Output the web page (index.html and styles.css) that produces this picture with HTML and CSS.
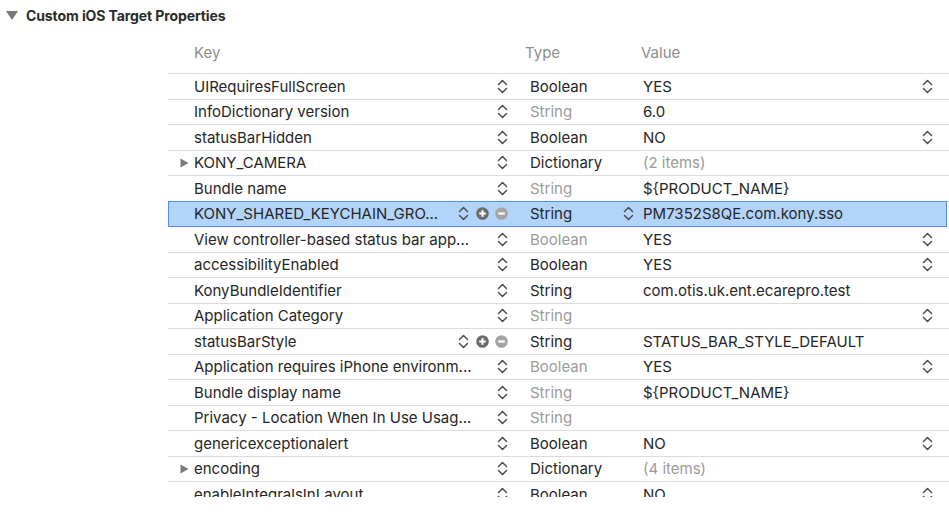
FILE: index.html
```html
<!DOCTYPE html>
<html>
<head>
<meta charset="utf-8">
<link rel="stylesheet" href="styles.css">
</head>
<body>
<svg width="0" height="0" class="defs">
  <defs>
    <symbol id="updown" viewBox="0 0 11 17">
      <path d="M1.5 6.5 L5.5 2.5 L9.5 6.5" fill="none" stroke="#4d4d4d" stroke-width="1.5" stroke-linecap="round" stroke-linejoin="round"/>
      <path d="M1.5 10.5 L5.5 14.5 L9.5 10.5" fill="none" stroke="#4d4d4d" stroke-width="1.5" stroke-linecap="round" stroke-linejoin="round"/>
    </symbol>
    <symbol id="plus" viewBox="0 0 13 13">
      <circle cx="6.5" cy="6.5" r="6.3" fill="#6b6b6b"/>
      <path d="M6.5 3.2 V9.8 M3.2 6.5 H9.8" stroke="#fff" stroke-width="2.2"/>
    </symbol>
    <symbol id="minus" viewBox="0 0 13 13">
      <circle cx="6.5" cy="6.5" r="6.3" fill="#a3a3a3"/>
      <path d="M3.2 6.5 H9.8" stroke="#fff" stroke-width="2.2"/>
    </symbol>
    <symbol id="tri-right" viewBox="0 0 9 10">
      <path d="M0.5 0.5 L8.5 5 L0.5 9.5 Z" fill="#7a7a7a"/>
    </symbol>
  </defs>
</svg>

<div class="section-header">
  <svg class="disclosure" width="12" height="9" viewBox="0 0 12 9"><path d="M0 0 H12 L6 9 Z" fill="#7a7a7a"/></svg>
  <span class="section-title">Custom iOS Target Properties</span>
</div>

<div class="plist">
  <div class="col-head">
    <span></span>
    <span class="h-key">Key</span>
    <span class="h-type">Type</span>
    <span class="h-value">Value</span>
  </div>
  <div class="rows">
    <div class="row">
      <span class="arrow"></span>
      <span class="key"><span class="key-text">UIRequiresFullScreen</span><svg class="ud"><use href="#updown"/></svg></span>
      <span class="type">Boolean</span>
      <span class="value"><span>YES</span><svg class="ud"><use href="#updown"/></svg></span>
    </div>
    <div class="row">
      <span class="arrow"></span>
      <span class="key"><span class="key-text">InfoDictionary version</span><svg class="ud"><use href="#updown"/></svg></span>
      <span class="type dim">String</span>
      <span class="value"><span>6.0</span></span>
    </div>
    <div class="row">
      <span class="arrow"></span>
      <span class="key"><span class="key-text">statusBarHidden</span><svg class="ud"><use href="#updown"/></svg></span>
      <span class="type">Boolean</span>
      <span class="value"><span>NO</span><svg class="ud"><use href="#updown"/></svg></span>
    </div>
    <div class="row">
      <span class="arrow"><svg class="tri"><use href="#tri-right"/></svg></span>
      <span class="key"><span class="key-text">KONY_CAMERA</span><svg class="ud"><use href="#updown"/></svg></span>
      <span class="type">Dictionary</span>
      <span class="value"><span class="dim">(2 items)</span></span>
    </div>
    <div class="row">
      <span class="arrow"></span>
      <span class="key"><span class="key-text">Bundle name</span><svg class="ud"><use href="#updown"/></svg></span>
      <span class="type dim">String</span>
      <span class="value"><span>${PRODUCT_NAME}</span></span>
    </div>
    <div class="row selected">
      <span class="arrow"></span>
      <span class="key"><span class="key-text">KONY_SHARED_KEYCHAIN_GRO...</span><svg class="ud"><use href="#updown"/></svg><svg class="pm"><use href="#plus"/></svg><svg class="pm"><use href="#minus"/></svg></span>
      <span class="type type-sel"><span>String</span><svg class="ud"><use href="#updown"/></svg></span>
      <span class="value"><span>PM7352S8QE.com.kony.sso</span></span>
    </div>
    <div class="row">
      <span class="arrow"></span>
      <span class="key"><span class="key-text">View controller-based status bar app...</span><svg class="ud"><use href="#updown"/></svg></span>
      <span class="type dim">Boolean</span>
      <span class="value"><span>YES</span><svg class="ud"><use href="#updown"/></svg></span>
    </div>
    <div class="row">
      <span class="arrow"></span>
      <span class="key"><span class="key-text">accessibilityEnabled</span><svg class="ud"><use href="#updown"/></svg></span>
      <span class="type">Boolean</span>
      <span class="value"><span>YES</span><svg class="ud"><use href="#updown"/></svg></span>
    </div>
    <div class="row">
      <span class="arrow"></span>
      <span class="key"><span class="key-text">KonyBundleIdentifier</span><svg class="ud"><use href="#updown"/></svg></span>
      <span class="type">String</span>
      <span class="value"><span>com.otis.uk.ent.ecarepro.test</span></span>
    </div>
    <div class="row">
      <span class="arrow"></span>
      <span class="key"><span class="key-text">Application Category</span><svg class="ud"><use href="#updown"/></svg></span>
      <span class="type dim">String</span>
      <span class="value"><span></span><svg class="ud"><use href="#updown"/></svg></span>
    </div>
    <div class="row">
      <span class="arrow"></span>
      <span class="key"><span class="key-text">statusBarStyle</span><svg class="ud"><use href="#updown"/></svg><svg class="pm"><use href="#plus"/></svg><svg class="pm"><use href="#minus"/></svg></span>
      <span class="type">String</span>
      <span class="value"><span>STATUS_BAR_STYLE_DEFAULT</span></span>
    </div>
    <div class="row">
      <span class="arrow"></span>
      <span class="key"><span class="key-text">Application requires iPhone environm...</span><svg class="ud"><use href="#updown"/></svg></span>
      <span class="type dim">Boolean</span>
      <span class="value"><span>YES</span><svg class="ud"><use href="#updown"/></svg></span>
    </div>
    <div class="row">
      <span class="arrow"></span>
      <span class="key"><span class="key-text">Bundle display name</span><svg class="ud"><use href="#updown"/></svg></span>
      <span class="type dim">String</span>
      <span class="value"><span>${PRODUCT_NAME}</span></span>
    </div>
    <div class="row">
      <span class="arrow"></span>
      <span class="key"><span class="key-text">Privacy - Location When In Use Usag...</span><svg class="ud"><use href="#updown"/></svg></span>
      <span class="type dim">String</span>
      <span class="value"><span></span></span>
    </div>
    <div class="row">
      <span class="arrow"></span>
      <span class="key"><span class="key-text">genericexceptionalert</span><svg class="ud"><use href="#updown"/></svg></span>
      <span class="type">Boolean</span>
      <span class="value"><span>NO</span><svg class="ud"><use href="#updown"/></svg></span>
    </div>
    <div class="row">
      <span class="arrow"><svg class="tri"><use href="#tri-right"/></svg></span>
      <span class="key"><span class="key-text">encoding</span><svg class="ud"><use href="#updown"/></svg></span>
      <span class="type">Dictionary</span>
      <span class="value"><span class="dim">(4 items)</span></span>
    </div>
    <div class="row">
      <span class="arrow"></span>
      <span class="key"><span class="key-text">enableIntegralsInLayout</span><svg class="ud"><use href="#updown"/></svg></span>
      <span class="type">Boolean</span>
      <span class="value"><span>NO</span><svg class="ud"><use href="#updown"/></svg></span>
    </div>
  </div>
</div>
</body>
</html>
```
FILE: styles.css
```css
html, body {
  margin: 0;
  padding: 0;
  background: #ffffff;
}
body {
  font-family: Inter, "Liberation Sans", sans-serif;
  color: #262626;
  width: 949px;
  height: 517px;
  overflow: hidden;
}
.defs {
  position: absolute;
  width: 0;
  height: 0;
}
.section-header {
  display: flex;
  align-items: center;
  height: 31px;
  padding-left: 6px;
  gap: 8px;
}
.disclosure {
  flex: none;
}
.section-title {
  font-size: 14px;
  font-weight: 700;
  color: #2a2a2a;
  letter-spacing: -0.1px;
}
.plist {
  margin-left: 168px;
}
.col-head {
  display: grid;
  grid-template-columns: 26px 336px 112px 1fr;
  height: 42px;
  align-items: center;
  font-size: 15px;
  color: #8e8e8e;
}
.h-type {
  margin-left: -5px;
}
.h-value {
  margin-left: -1px;
}
.rows {
  border-top: 1px solid #dcdcdc;
  height: 423px;
  overflow: hidden;
}
.row {
  display: grid;
  grid-template-columns: 26px 336px 112px 1fr;
  height: 25.5px;
  box-sizing: border-box;
  border-bottom: 1px solid #dcdcdc;
  align-items: center;
  font-size: 15px;
  white-space: nowrap;
}
.row.selected {
  background: #b2d3fa;
  border-bottom-color: #4f93e4;
  box-shadow: inset 1px 1px 0 #4f93e4, inset -1px 0 0 #4f93e4;
  margin-top: -1px;
  height: 26.5px;
  padding-top: 1px;
  margin-right: 2px;
}
.arrow {
  display: flex;
  align-items: center;
  padding-left: 12px;
}
.tri {
  width: 9px;
  height: 10px;
}
.key {
  display: flex;
  align-items: center;
  padding-right: 22px;
  min-width: 0;
}
.key-text {
  flex: 1;
  overflow: hidden;
  min-width: 0;
}
.ud {
  width: 11px;
  height: 17px;
  flex: none;
}
.pm {
  width: 13px;
  height: 13px;
  flex: none;
  margin-left: 7px;
}
.key .pm + .pm {
  margin-left: 6px;
}
.key .ud {
  margin-left: 4px;
}
.type-sel {
  display: flex;
  align-items: center;
  justify-content: space-between;
  padding-right: 8px;
}
.dim {
  color: #9b9b9b;
}
.value {
  display: flex;
  align-items: center;
  justify-content: space-between;
  padding-left: 1px;
  padding-right: 16px;
}
```
